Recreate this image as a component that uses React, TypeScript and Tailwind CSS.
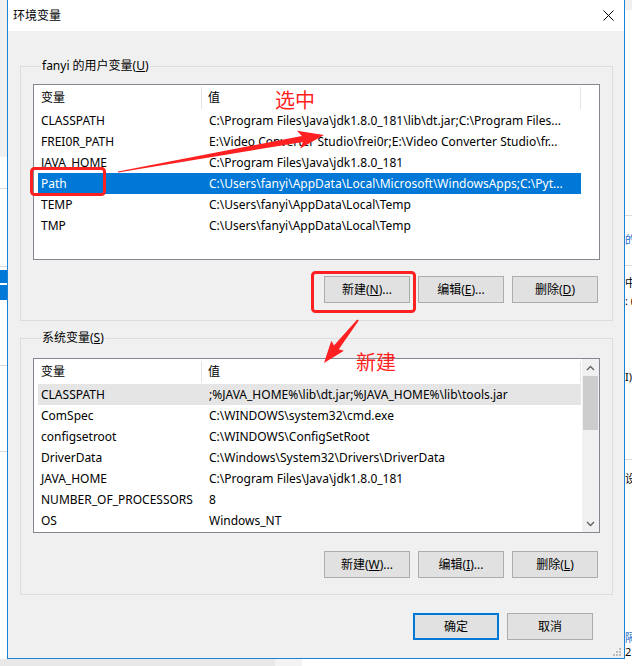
import React from 'react';

const userVars = [
  ['CLASSPATH', 'C:\\Program Files\\Java\\jdk1.8.0_181\\lib\\dt.jar;C:\\Program Files...'],
  ['FREI0R_PATH', 'E:\\Video Converter Studio\\frei0r;E:\\Video Converter Studio\\fr...'],
  ['JAVA_HOME', 'C:\\Program Files\\Java\\jdk1.8.0_181'],
  ['Path', 'C:\\Users\\fanyi\\AppData\\Local\\Microsoft\\WindowsApps;C:\\Pyt...'],
  ['TEMP', 'C:\\Users\\fanyi\\AppData\\Local\\Temp'],
  ['TMP', 'C:\\Users\\fanyi\\AppData\\Local\\Temp'],
];

const sysVars = [
  ['CLASSPATH', ';%JAVA_HOME%\\lib\\dt.jar;%JAVA_HOME%\\lib\\tools.jar'],
  ['ComSpec', 'C:\\WINDOWS\\system32\\cmd.exe'],
  ['configsetroot', 'C:\\WINDOWS\\ConfigSetRoot'],
  ['DriverData', 'C:\\Windows\\System32\\Drivers\\DriverData'],
  ['JAVA_HOME', 'C:\\Program Files\\Java\\jdk1.8.0_181'],
  ['NUMBER_OF_PROCESSORS', '8'],
  ['OS', 'Windows_NT'],
];

const Btn = ({ children, primary }: { children: React.ReactNode; primary?: boolean }) => (
  <button
    className={
      primary
        ? 'h-[27px] w-[86px] bg-[#e1e1e1] border-2 border-[#0078d7] text-[12px] text-black'
        : 'h-[27px] w-[86px] bg-[#e1e1e1] border border-[#adadad] text-[12px] text-black'
    }
  >
    {children}
  </button>
);

const Header = () => (
  <div className="flex h-[25px] items-center">
    <div className="w-[164px] h-[22px] pl-[3px] border-r border-[#e5e5e5] leading-[22px]">变量</div>
    <div className="w-[379px] h-[22px] pl-[6px] border-r border-[#e5e5e5] leading-[22px]">值</div>
  </div>
);

const Row = ({ name, value, selected, hover }: { name: string; value: string; selected?: boolean; hover?: boolean }) => (
  <div
    className={
      selected
        ? 'flex h-[21px] leading-[21px] w-[543px] bg-[#0078d7] text-white whitespace-nowrap'
        : hover
        ? 'flex h-[21px] leading-[21px] w-[543px] bg-[#e5e5e5] whitespace-nowrap'
        : 'flex h-[21px] leading-[21px] w-[543px] whitespace-nowrap'
    }
  >
    <div className="w-[164px] pl-[3px] overflow-hidden">{name}</div>
    <div className="flex-1 pl-[7px] overflow-hidden">{value}</div>
  </div>
);

const Chevron = ({ up }: { up?: boolean }) => (
  <svg width="9" height="6" viewBox="0 0 9 6">
    <path d={up ? 'M1 5 L4.5 1.5 L8 5' : 'M1 1 L4.5 4.5 L8 1'} fill="none" stroke="#606060" strokeWidth="1.3" />
  </svg>
);

const Dialog = () => (
  <div className="relative w-[618px] h-[659px] border-l border-r border-b border-[#1883d7] flex flex-col bg-[#f0f0f0]">
    {/* title bar */}
    <div className="h-[31px] bg-white flex items-center justify-between pl-[5px] pr-[10px]">
      <span className="text-[12px]">环境变量</span>
      <svg width="11" height="11" viewBox="0 0 11 11">
        <path d="M0.5 0.5 L10.5 10.5 M10.5 0.5 L0.5 10.5" stroke="#000" strokeWidth="1" />
      </svg>
    </div>

    {/* user variables */}
    <fieldset className="ml-[12px] mt-[27px] w-[593px] border border-[#dcdcdc] pl-[12px] pr-[11px] pb-[17px]">
      <legend className="ml-[8px] px-[1px] leading-[16px] text-[12px]">
        fanyi 的用户变量(<u>U</u>)
      </legend>
      <div className="mt-[10px] w-[567px] h-[176px] border border-[#828790] bg-white pl-[4px]">
        <Header />
        {userVars.map(([n, v]) => (
          <Row key={n} name={n} value={v} selected={n === 'Path'} />
        ))}
      </div>
      <div className="mt-[16px] flex justify-end gap-[8px] pr-[3px]">
        <Btn>新建(<u>N</u>)...</Btn>
        <Btn>编辑(<u>E</u>)...</Btn>
        <Btn>删除(<u>D</u>)</Btn>
      </div>
    </fieldset>

    {/* system variables */}
    <fieldset className="ml-[12px] mt-[9px] w-[593px] border border-[#dcdcdc] pl-[12px] pr-[11px] pb-[16px]">
      <legend className="ml-[8px] px-[1px] leading-[16px] text-[12px]">
        系统变量(<u>S</u>)
      </legend>
      <div className="mt-[12px] w-[567px] h-[175px] border border-[#828790] bg-white flex">
        <div className="flex-1 pl-[4px]">
          <Header />
          {sysVars.map(([n, v], i) => (
            <Row key={n} name={n} value={v} hover={i === 0} />
          ))}
        </div>
        <div className="w-[17px] bg-[#f0f0f0] flex flex-col items-center">
          <div className="h-[17px] flex items-center justify-center">
            <Chevron up />
          </div>
          <div className="w-[15px] h-[54px] bg-[#cdcdcd]" />
          <div className="flex-1" />
          <div className="h-[17px] flex items-center justify-center">
            <Chevron />
          </div>
        </div>
      </div>
      <div className="mt-[18px] flex justify-end gap-[8px] pr-[3px]">
        <Btn>新建(<u>W</u>)...</Btn>
        <Btn>编辑(<u>I</u>)...</Btn>
        <Btn>删除(<u>L</u>)</Btn>
      </div>
    </fieldset>

    <div className="mt-[18px] flex justify-end gap-[8px] pr-[31px]">
      <Btn primary>确定</Btn>
      <Btn>取消</Btn>
    </div>

    {/* resize grip */}
    <svg className="absolute right-[3px] bottom-[2px]" width="8" height="8" viewBox="0 0 8 8">
      <rect x="6" y="0" width="2" height="2" fill="#bcbcbc" />
      <rect x="3" y="3" width="2" height="2" fill="#bcbcbc" />
      <rect x="6" y="3" width="2" height="2" fill="#bcbcbc" />
      <rect x="0" y="6" width="2" height="2" fill="#bcbcbc" />
      <rect x="3" y="6" width="2" height="2" fill="#bcbcbc" />
      <rect x="6" y="6" width="2" height="2" fill="#bcbcbc" />
    </svg>
  </div>
);

const LeftStrip = () => (
  <div className="w-[7px] flex flex-col">
    <div className="h-[157px] bg-[#f0f0f0]" />
    <div className="h-[31px] bg-white" />
    <div className="h-px bg-[#dadada]" />
    <div className="h-[77px] bg-white" />
    <div className="h-px bg-[#dadada]" />
    <div className="h-[3px] bg-white" />
    <div className="h-[13px] bg-[#0078d7]" />
    <div className="h-[2px] bg-white" />
    <div className="h-[15px] bg-[#0078d7]" />
    <div className="h-[65px] bg-white" />
    <div className="h-px bg-[#dadada]" />
    <div className="h-[85px] bg-white" />
    <div className="h-px bg-[#dadada]" />
    <div className="flex-1 bg-white" />
  </div>
);

const RightStrip = () => (
  <div className="w-[7px] flex flex-col text-[11px] overflow-hidden">
    <div className="h-[10px] bg-[#f0f0f0]" />
    <div className="h-[205px] bg-white" />
    <div className="h-px bg-[#dadada]" />
    <div className="h-[17px]" />
    <div className="h-[14px] leading-[14px] text-[#1a6fc9] whitespace-nowrap">的</div>
    <div className="h-[18px]" />
    <div className="h-px bg-[#dadada]" />
    <div className="h-[10px]" />
    <div className="h-[14px] leading-[14px] whitespace-nowrap">中</div>
    <div className="h-[4px]" />
    <div className="h-[14px] leading-[14px] whitespace-nowrap">: (</div>
    <div className="h-[63px]" />
    <div className="h-[14px] leading-[14px] whitespace-nowrap">I):</div>
    <div className="h-[75px]" />
    <div className="h-px bg-[#dadada]" />
    <div className="h-[12px]" />
    <div className="h-[14px] leading-[14px] whitespace-nowrap">设</div>
    <div className="h-[145px]" />
    <div className="h-[14px] leading-[14px] text-[#1a6fc9] whitespace-nowrap">隔</div>
    <div className="h-[14px] leading-[14px] whitespace-nowrap">2</div>
    <div className="flex-1" />
  </div>
);

export default function App() {
  return (
    <div className="relative w-[632px] h-[666px] overflow-hidden bg-white text-black text-[12px] font-['Noto_Sans','Noto_Sans_CJK_SC',sans-serif]">
      <div className="flex h-[659px]">
        <LeftStrip />
        <Dialog />
        <RightStrip />
      </div>
      <div className="flex h-[7px]">
        <div className="w-[275px] bg-[#e8e8e8]" />
        <div className="w-[27px] bg-[#f3f3f3]" />
        <div className="flex-1 bg-white" />
      </div>

      {/* red annotations */}
      <svg className="absolute inset-0 pointer-events-none" width="632" height="666" viewBox="0 0 632 666">
        <rect x="31.5" y="168.5" width="73" height="26" rx="3" fill="none" stroke="#ff2121" strokeWidth="3" />
        <rect x="312.5" y="272.5" width="102" height="39" rx="3" fill="none" stroke="#ff2121" strokeWidth="3" />
        <polygon
          points="118.1,172.5 302.9,141.9 300.1,148.5 324,135 296.9,130.7 301.9,135.9 117.9,171.5"
          fill="#ff2121"
        />
        <polygon
          points="358.8,320.6 338.8,349.2 343.9,350.7 324,363 331.3,340.7 334,345.4 357.2,319.4"
          fill="#ff2121"
        />
      </svg>
      <div className="absolute left-[275px] top-[88px] text-[20px] leading-[24px] text-[#ff1f1f] font-['Noto_Sans_CJK_SC',sans-serif]">
        选中
      </div>
      <div className="absolute left-[356px] top-[350px] text-[20px] leading-[24px] text-[#ff1f1f] font-['Noto_Sans_CJK_SC',sans-serif]">
        新建
      </div>
    </div>
  );
}
